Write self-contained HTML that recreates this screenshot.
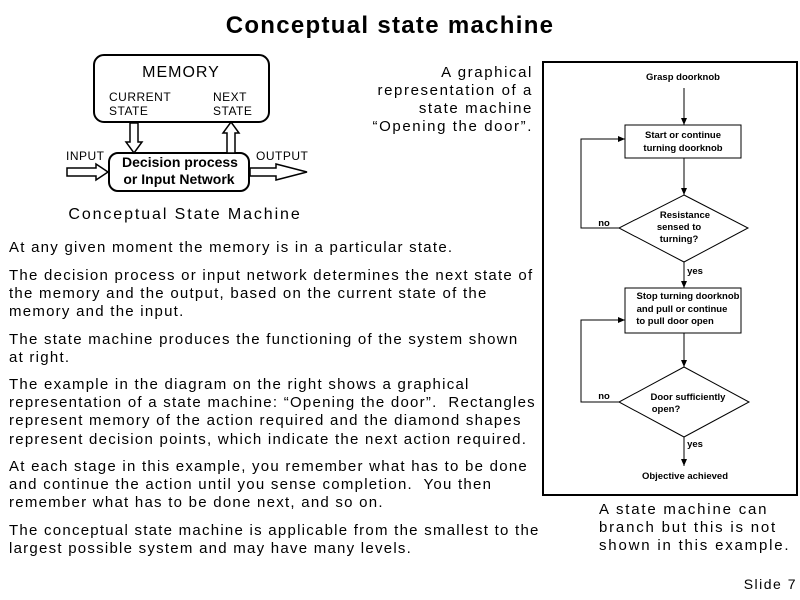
<!DOCTYPE html>
<html><head><style>
body{margin:0;width:800px;height:600px;background:#fff;position:relative;overflow:hidden;font-family:"Liberation Sans",Arial,sans-serif;color:#000}
.a{position:absolute;white-space:nowrap}
.t{font-size:15px;line-height:18px;left:9px;letter-spacing:1.25px}
.r{font-size:15px;line-height:18px;text-align:right;right:267px;letter-spacing:1.6px}
</style></head><body>
<div class="a" style="left:0;width:780px;text-align:center;top:12px;font-size:24px;font-weight:bold;letter-spacing:1.3px">Conceptual state machine</div>

<svg class="a" style="left:0;top:0" width="800" height="600">
<defs><marker id="ar" markerWidth="8" markerHeight="8" refX="7" refY="4" orient="auto"><path d="M0,1 L7,4 L0,7 Z" fill="#000"/></marker></defs>
<rect x="94" y="55" width="175" height="67" rx="10" fill="#fff" stroke="#000" stroke-width="2"/>
<rect x="109" y="153" width="140" height="38" rx="9" fill="#fff" stroke="#000" stroke-width="2"/>
<path d="M130,123 V142 H126 L134,153 L142,142 H138 V123 Z" fill="#fff" stroke="#000" stroke-width="1.5"/>
<path d="M227,153 V133 H223 L231,122 L239,133 H235 V153 Z" fill="#fff" stroke="#000" stroke-width="1.5"/>
<path d="M67,168 H96 V164 L108,172 L96,180 V176 H67 Z" fill="#fff" stroke="#000" stroke-width="1.5"/>
<path d="M250,168 H276 V164 L307,172 L276,180 V176 H250 Z" fill="#fff" stroke="#000" stroke-width="1.5"/>
<text x="181" y="77" font-size="16" text-anchor="middle" font-family="Liberation Sans" letter-spacing="1">MEMORY</text>
<text x="109" y="101" font-size="12" font-family="Liberation Sans" letter-spacing="0.5">CURRENT</text>
<text x="109" y="115" font-size="12" font-family="Liberation Sans" letter-spacing="0.5">STATE</text>
<text x="213" y="101" font-size="12" font-family="Liberation Sans" letter-spacing="0.5">NEXT</text>
<text x="213" y="115" font-size="12" font-family="Liberation Sans" letter-spacing="0.5">STATE</text>
<text x="66" y="160" font-size="12" font-family="Liberation Sans" letter-spacing="0.5">INPUT</text>
<text x="256" y="160" font-size="12" font-family="Liberation Sans" letter-spacing="0.5">OUTPUT</text>
<text x="180" y="167" font-size="14" font-weight="bold" text-anchor="middle" font-family="Liberation Sans">Decision process</text>
<text x="179" y="184" font-size="14" font-weight="bold" text-anchor="middle" font-family="Liberation Sans">or Input Network</text>
<text x="185" y="219" font-size="16" text-anchor="middle" font-family="Liberation Sans" letter-spacing="1.9">Conceptual State Machine</text>

<rect x="543" y="62" width="254" height="433" fill="none" stroke="#000" stroke-width="2"/>
<g font-family="Liberation Sans" font-size="9.5" font-weight="bold" text-anchor="middle">
<text x="683" y="80">Grasp doorknob</text>
<line x1="684" y1="88" x2="684" y2="125" stroke="#000" marker-end="url(#ar)"/>
<rect x="625" y="125" width="116" height="33" fill="#fff" stroke="#000"/>
<text x="683" y="138">Start or continue</text>
<text x="683" y="151">turning doorknob</text>
<line x1="684" y1="158" x2="684" y2="195" stroke="#000" marker-end="url(#ar)"/>
<path d="M684,195 L748,228 L684,262 L619,228 Z" fill="#fff" stroke="#000"/>
<text x="685" y="218">Resistance</text>
<text x="679" y="230">sensed to</text>
<text x="679" y="242">turning?</text>
<path d="M619,228 H581 V139 H625" fill="none" stroke="#000" marker-end="url(#ar)"/>
<text x="604" y="226">no</text>
<line x1="684" y1="262" x2="684" y2="288" stroke="#000" marker-end="url(#ar)"/>
<text x="695" y="274">yes</text>
<rect x="625" y="288" width="116" height="45" fill="#fff" stroke="#000"/>
<text x="688" y="299">Stop turning doorknob</text>
<text x="682" y="312">and pull or continue</text>
<text x="675" y="324">to pull door open</text>
<line x1="684" y1="333" x2="684" y2="367" stroke="#000" marker-end="url(#ar)"/>
<path d="M684,367 L749,402 L684,437 L619,402 Z" fill="#fff" stroke="#000"/>
<text x="688" y="400">Door sufficiently</text>
<text x="666" y="412">open?</text>
<path d="M619,402 H581 V320 H625" fill="none" stroke="#000" marker-end="url(#ar)"/>
<text x="604" y="399">no</text>
<line x1="684" y1="437" x2="684" y2="466" stroke="#000" marker-end="url(#ar)"/>
<text x="695" y="447">yes</text>
<text x="685" y="479">Objective achieved</text>
</g>
</svg>

<div class="a r" style="top:64px">A graphical</div>
<div class="a r" style="top:82px">representation of a</div>
<div class="a r" style="top:100px">state machine</div>
<div class="a r" style="top:118px">“Opening the door”.</div>

<div class="a t" style="top:239px">At any given moment the memory is in a particular state.</div>
<div class="a t" style="top:267px">The decision process or input network determines the next state of</div>
<div class="a t" style="top:285px">the memory and the output, based on the current state of the</div>
<div class="a t" style="top:303px">memory and the input.</div>
<div class="a t" style="top:331px">The state machine produces the functioning of the system shown</div>
<div class="a t" style="top:349px">at right.</div>
<div class="a t" style="top:376px">The example in the diagram on the right shows a graphical</div>
<div class="a t" style="top:394px">representation of a state machine: “Opening the door”.&nbsp; Rectangles</div>
<div class="a t" style="top:412px">represent memory of the action required and the diamond shapes</div>
<div class="a t" style="top:431px">represent decision points, which indicate the next action required.</div>
<div class="a t" style="top:458px">At each stage in this example, you remember what has to be done</div>
<div class="a t" style="top:476px">and continue the action until you sense completion.&nbsp; You then</div>
<div class="a t" style="top:494px">remember what has to be done next, and so on.</div>
<div class="a t" style="top:522px">The conceptual state machine is applicable from the smallest to the</div>
<div class="a t" style="top:540px">largest possible system and may have many levels.</div>

<div class="a" style="left:599px;top:501px;font-size:15px;line-height:18px;letter-spacing:1.8px">A state machine can<br>branch but this is not<br>shown in this example.</div>
<div class="a" style="right:3px;top:576px;font-size:14px;letter-spacing:1.5px">Slide 7</div>
</body></html>
